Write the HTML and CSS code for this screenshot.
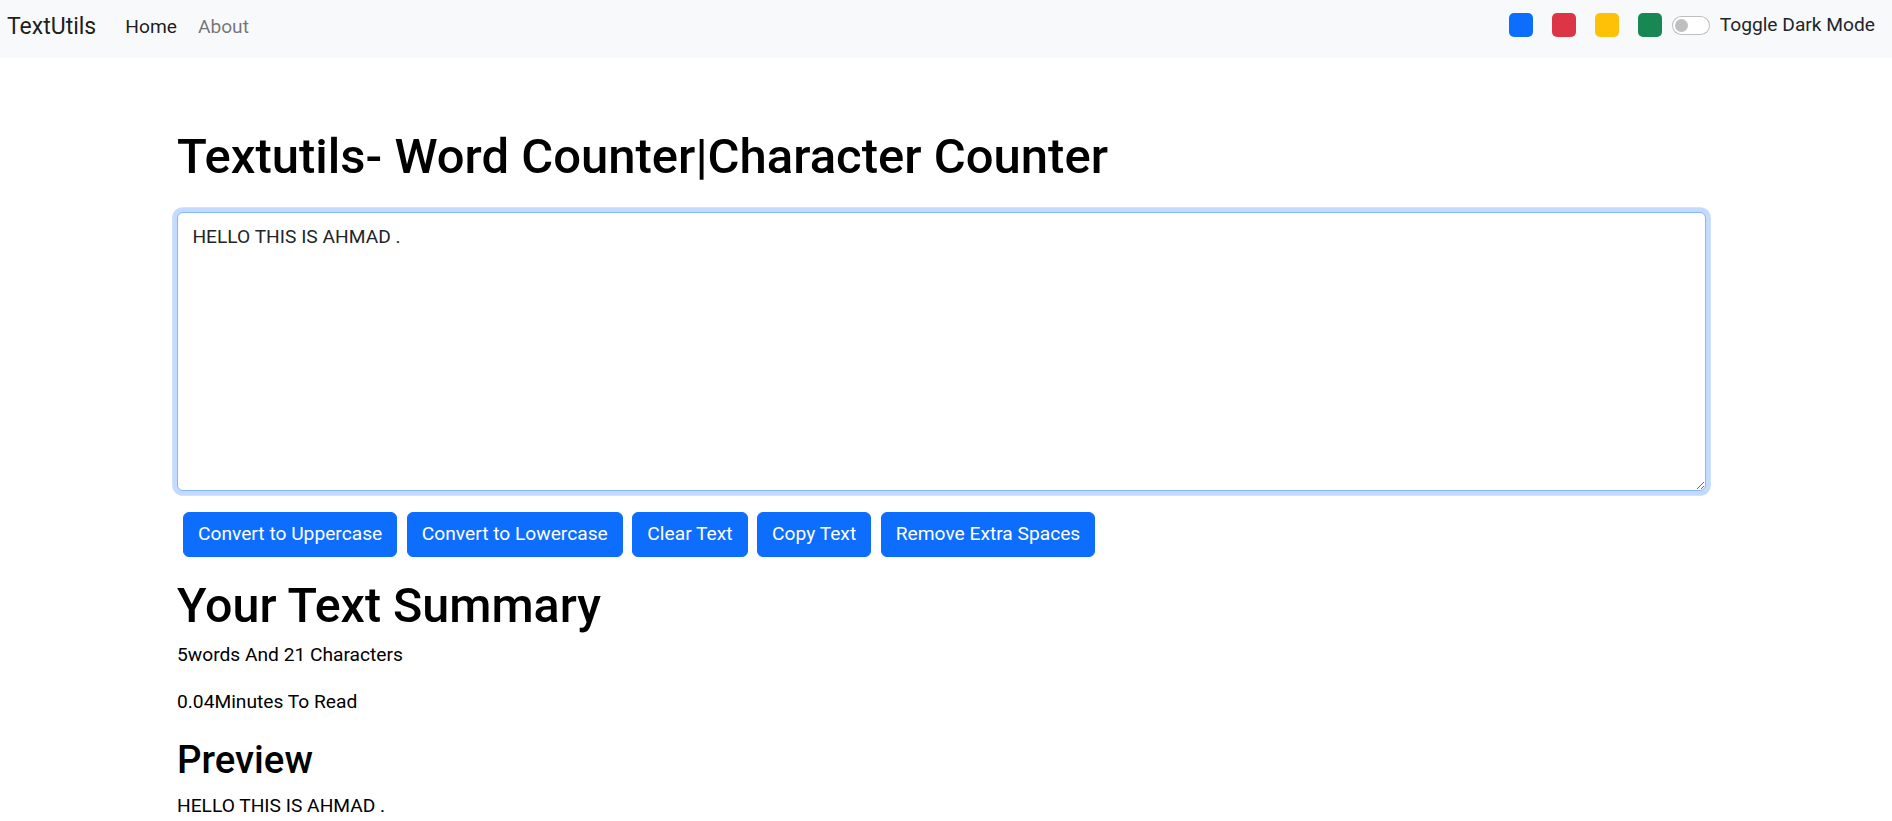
FILE: index.html
```html
<!DOCTYPE html>
<html lang="en">
<head>
<meta charset="utf-8">
<title>TextUtils</title>
<link rel="stylesheet" href="styles.css">
</head>
<body>
<nav class="navbar">
  <div class="nav-left">
    <a class="brand" href="#">TextUtils</a>
    <a class="nav-link active" href="#">Home</a>
    <a class="nav-link" href="#">About</a>
  </div>
  <div class="nav-right">
    <span class="swatch swatch-blue"></span>
    <span class="swatch swatch-red"></span>
    <span class="swatch swatch-yellow"></span>
    <span class="swatch swatch-green"></span>
    <span class="switch"><span class="knob"></span></span>
    <span class="switch-label">Toggle Dark Mode</span>
  </div>
</nav>
<main class="main">
  <h1 class="title">Textutils- Word Counter|Character Counter</h1>
  <textarea class="editor" rows="8">HELLO THIS IS AHMAD .</textarea>
  <div class="actions">
    <button class="btn">Convert to Uppercase</button>
    <button class="btn">Convert to Lowercase</button>
    <button class="btn">Clear Text</button>
    <button class="btn">Copy Text</button>
    <button class="btn">Remove Extra Spaces</button>
  </div>
  <h1 class="summary">Your Text Summary</h1>
  <p class="stat stat-first">5words And 21 Characters</p>
  <p class="stat stat-second">0.04Minutes To Read</p>
  <h2 class="preview-title">Preview</h2>
  <p class="preview">HELLO THIS IS AHMAD .</p>
</main>
</body>
</html>
```
FILE: styles.css
```css
* { box-sizing: border-box; }
html, body { margin: 0; padding: 0; }
body {
  font-family: Roboto, "Liberation Sans", sans-serif;
  color: #000;
  background: #fff;
  font-size: 19.2px;
  line-height: 28.8px;
}
.navbar {
  height: 58px;
  background: #f8f9fa;
  display: flex;
  align-items: center;
  justify-content: space-between;
  padding: 0 17px 4px 7px;
}
.nav-left { display: flex; align-items: center; }
.brand {
  font-size: 23px;
  line-height: 36px;
  color: rgba(0,0,0,.9);
  text-decoration: none;
  margin-right: 29px;
}
.nav-link {
  font-size: 19.2px;
  color: rgba(0,0,0,.55);
  text-decoration: none;
  margin-right: 21px;
}
.nav-link.active { color: rgba(0,0,0,.9); }
.nav-right {
  display: flex;
  align-items: center;
  margin-bottom: 3px;
}
.swatch {
  width: 24px;
  height: 24px;
  border-radius: 5px;
  margin-right: 19px;
}
.swatch-blue { background: #0d6efd; }
.swatch-red { background: #dc3545; }
.swatch-yellow { background: #ffc107; }
.swatch-green { background: #198754; margin-right: 10px; }
.switch {
  width: 38px;
  height: 19px;
  border: 1.2px solid rgba(0,0,0,.25);
  border-radius: 10px;
  background: #fff;
  display: flex;
  align-items: center;
  padding-left: 2px;
  margin-right: 10px;
}
.knob {
  width: 13px;
  height: 13px;
  border-radius: 50%;
  background: #bfbfbf;
}
.switch-label { color: #212529; }

.main {
  margin-left: 177px;
  width: 1529px;
}
.title {
  font-size: 49px;
  line-height: 57.6px;
  font-weight: 500;
  margin: 70px 0 0;
}
.editor {
  display: block;
  width: 1529px;
  height: 279px;
  margin: 26px 0 0;
  padding: 10px 14.4px 7.2px;
  font-family: Roboto, "Liberation Sans", sans-serif;
  font-size: 19.2px;
  line-height: 28.8px;
  color: #212529;
  border: 1.2px solid #86b7fe;
  border-radius: 6px;
  box-shadow: 0 0 0 4.8px rgba(13,110,253,.25);
  outline: none;
  resize: vertical;
}
.actions {
  display: flex;
  gap: 9.6px;
  margin-top: 21.4px;
  padding-left: 6px;
}
.btn {
  font-family: Roboto, "Liberation Sans", sans-serif;
  font-size: 19.2px;
  line-height: 28.8px;
  color: #fff;
  background: #0d6efd;
  border: 1.2px solid #0d6efd;
  border-radius: 6px;
  padding: 7.2px 14px;
}
.summary {
  font-size: 48.4px;
  line-height: 57.6px;
  font-weight: 500;
  margin: 19.4px 0 0;
}
.stat { margin: 0; }
.stat-first { margin-top: 6.4px; }
.stat-second { margin-top: 18.2px; }
.preview-title {
  font-size: 38.4px;
  line-height: 46px;
  font-weight: 500;
  margin: 20.2px 0 0;
}
.preview { margin: 9.6px 0 0; }
```
